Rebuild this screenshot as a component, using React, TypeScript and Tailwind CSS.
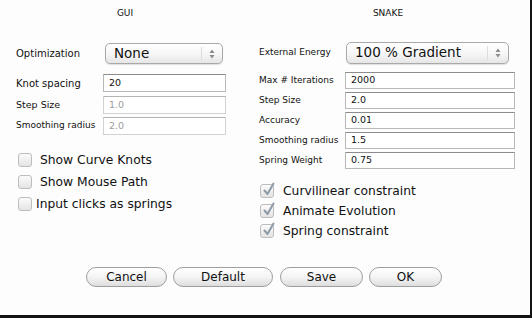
import React from "react";

const font = { fontFamily: '"DejaVu Sans", "Liberation Sans", sans-serif' };

function Arrows() {
  return (
    <svg width="6" height="10" viewBox="0 0 6 10">
      <path d="M3 0.5 L5.5 4 L0.5 4 Z" fill="#8a8a8a" />
      <path d="M3 9.5 L5.5 6 L0.5 6 Z" fill="#8a8a8a" />
    </svg>
  );
}

function Select({ value, w }: { value: string; w: string }) {
  return (
    <div
      className={
        "flex h-full items-stretch rounded-[5px] border border-[#a9a9a9] bg-linear-to-b from-white via-[#f7f7f7] to-[#e6e6e6] shadow-[0_1px_1px_rgba(0,0,0,0.12)] " +
        w
      }
    >
      <div className="flex flex-1 items-center pl-[8px] text-[13.5px] leading-none text-[#111]">{value}</div>
      <div className="my-[3px] flex w-[21px] items-center justify-center border-l border-[#dcdcdc]">
        <Arrows />
      </div>
    </div>
  );
}

function Field({ value, w, disabled }: { value: string; w: string; disabled?: boolean }) {
  return (
    <div
      className={
        "flex h-full items-center border bg-white pl-[5px] text-[9.5px] " +
        (disabled
          ? "border-[#d2d2d2] border-t-[#b4b4b4] text-[#9c9c9c] "
          : "border-[#b8b8b8] border-t-[#8c8c8c] text-[#111] ") +
        w
      }
    >
      {value}
    </div>
  );
}

function Check({ checked }: { checked?: boolean }) {
  return (
    <div className="relative h-[14px] w-[14px] shrink-0 rounded-[3px] border border-[#bdbdbd] bg-linear-to-b from-[#fbfbfb] to-[#e4e4e4]">
      {checked && (
        <svg className="absolute -top-[3px] left-[1px]" width="14" height="15" viewBox="0 0 14 15">
          <path d="M2.5 8.5 L5.5 12 L11.5 1.5" fill="none" stroke="#8e9aa6" strokeWidth="2" strokeLinecap="round" strokeLinejoin="round" />
        </svg>
      )}
    </div>
  );
}

function Button({ label, w }: { label: string; w: string }) {
  return (
    <div
      className={
        "flex h-[20px] items-center justify-center rounded-full border border-[#9e9e9e] bg-linear-to-b from-white via-[#f4f4f4] to-[#dedede] text-[12px] text-[#111] " +
        w
      }
    >
      {label}
    </div>
  );
}

export default function App() {
  return (
    <div className="h-[318px] w-[532px] overflow-hidden bg-[#141414]" style={font}>
      <div className="flex h-[315px] w-[530px] flex-col bg-[#fdfdfd] text-[#111]">
        {/* titles */}
        <div className="flex h-[26px] pt-[7px] text-[9px] leading-[12px]">
          <div className="w-[250px] text-center">GUI</div>
          <div className="w-[276px] text-center">SNAKE</div>
        </div>

        <div className="flex h-[241px]">
          {/* GUI column */}
          <div className="flex w-[250px] flex-col pl-[16px]">
            <div className="mt-[17px] flex h-[21px] items-center">
              <div className="w-[89px] text-[10px]">Optimization</div>
              <Select value="None" w="w-[118px]" />
            </div>
            <div className="mt-[10px] flex h-[18px] items-center">
              <div className="w-[87px] text-[10px]">Knot spacing</div>
              <Field value="20" w="w-[123px]" />
            </div>
            <div className="mt-[4px] flex h-[18px] items-center">
              <div className="w-[87px] text-[9.5px]">Step Size</div>
              <Field value="1.0" w="w-[123px]" disabled />
            </div>
            <div className="mt-[3px] flex h-[18px] items-center">
              <div className="w-[87px] text-[9px]">Smoothing radius</div>
              <Field value="2.0" w="w-[123px]" disabled />
            </div>
            <div className="mt-[14px] flex h-[22px] items-center pl-[2px] text-[12.3px]">
              <Check />
              <span className="ml-[8px]">Show Curve Knots</span>
            </div>
            <div className="flex h-[22px] items-center pl-[2px] text-[12.3px]">
              <Check />
              <span className="ml-[8px]">Show Mouse Path</span>
            </div>
            <div className="flex h-[22px] items-center pl-[2px] text-[12.3px]">
              <Check />
              <span className="ml-[4px]">Input clicks as springs</span>
            </div>
          </div>

          {/* SNAKE column */}
          <div className="flex w-[276px] flex-col pl-[9px]">
            <div className="mt-[16px] flex h-[22px] items-center">
              <div className="w-[87px] text-[9px]">External Energy</div>
              <Select value="100 % Gradient" w="w-[163px]" />
            </div>
            {[
              ["Max # Iterations", "2000"],
              ["Step Size", "2.0"],
              ["Accuracy", "0.01"],
              ["Smoothing radius", "1.5"],
              ["Spring Weight", "0.75"],
            ].map(([label, value], i) => (
              <div key={label} className={(i === 0 ? "mt-[8px]" : "mt-[3px]") + " flex h-[17px] items-center"}>
                <div className="w-[86px] text-[9px]">{label}</div>
                <Field value={value} w="w-[170px]" />
              </div>
            ))}
            <div className="mt-[12px] flex h-[20px] items-center pl-[1px] text-[12.3px]">
              <Check checked />
              <span className="ml-[9px]">Curvilinear constraint</span>
            </div>
            <div className="flex h-[20px] items-center pl-[1px] text-[12.3px]">
              <Check checked />
              <span className="ml-[9px]">Animate Evolution</span>
            </div>
            <div className="flex h-[20px] items-center pl-[1px] text-[12.3px]">
              <Check checked />
              <span className="ml-[9px]">Spring constraint</span>
            </div>
          </div>
        </div>

        {/* buttons */}
        <div className="flex gap-[6px] pl-[86px]">
          <Button label="Cancel" w="w-[81px]" />
          <Button label="Default" w="w-[100px]" />
          <Button label="Save" w="ml-[1px] w-[83px]" />
          <Button label="OK" w="w-[73px]" />
        </div>
      </div>
    </div>
  );
}
